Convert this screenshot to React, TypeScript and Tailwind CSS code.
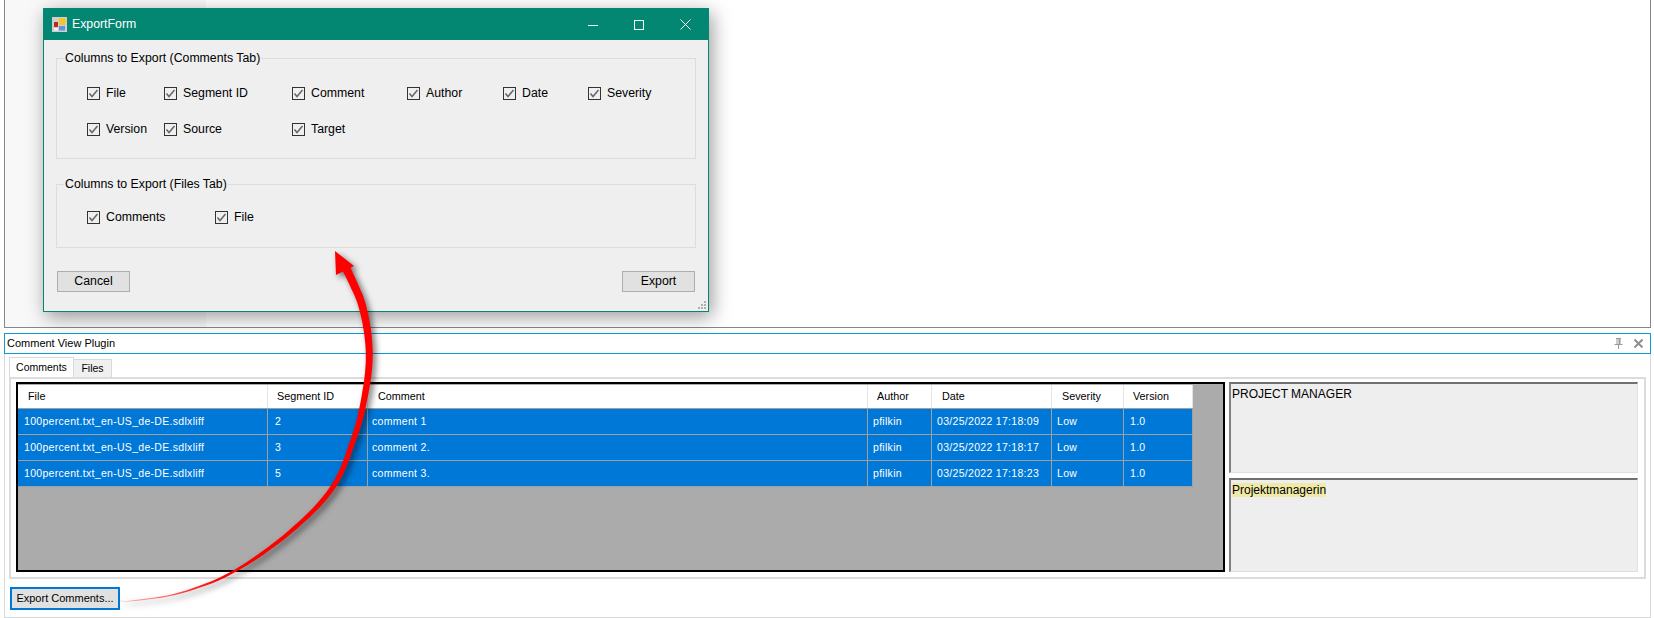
const FONT = "font-['Liberation_Sans',Arial,sans-serif]";

const columns = [
  { name: "File", pad: "pl-[10px]" },
  { name: "Segment ID", pad: "pl-[9px]" },
  { name: "Comment", pad: "pl-[10px]" },
  { name: "Author", pad: "pl-[9px]" },
  { name: "Date", pad: "pl-[10px]" },
  { name: "Severity", pad: "pl-[10px]" },
  { name: "Version", pad: "pl-[9px]" },
];

const cellPads = ["pl-[6px]", "pl-[7px]", "pl-[4px]", "pl-[5px]", "pl-[5px]", "pl-[5px]", "pl-[6px]"];

const rows = [
  ["100percent.txt_en-US_de-DE.sdlxliff", "2", "comment 1", "pfilkin", "03/25/2022 17:18:09", "Low", "1.0"],
  ["100percent.txt_en-US_de-DE.sdlxliff", "3", "comment 2.", "pfilkin", "03/25/2022 17:18:17", "Low", "1.0"],
  ["100percent.txt_en-US_de-DE.sdlxliff", "5", "comment 3.", "pfilkin", "03/25/2022 17:18:23", "Low", "1.0"],
];

const GRID_COLS = "grid grid-cols-[250px_100px_500px_64px_120px_72px_69px] w-[1175px]";

const Check = ({ label, w }: { label: string; w: string }) => (
  <div className={`flex items-center gap-[6px] ${w}`}>
    <span className="w-[13px] h-[13px] border border-[#333] flex items-center justify-center">
      <svg width="11" height="11" viewBox="0 0 11 11" fill="none">
        <path d="M1.5 5.5 L4 8.5 L9.5 2" stroke="#666" strokeWidth="1.5" />
      </svg>
    </span>
    <span className="text-[12.3px] leading-none text-black">{label}</span>
  </div>
);

const Group = ({ title, h, children }: { title: string; h: string; children: React.ReactNode }) => (
  <div className={`relative border border-[#dcdcdc] ${h}`}>
    <span className="absolute left-[7px] -top-[8px] bg-[#efefef] px-[1px] text-[12.3px] leading-[15px] text-black whitespace-nowrap">
      {title}
    </span>
    {children}
  </div>
);

const WinButton = ({ label }: { label: string }) => (
  <div className="w-[73px] h-[21px] border border-[#adadad] bg-[#e1e1e1] flex items-center justify-center text-[12.3px] text-black">
    {label}
  </div>
);

const ExportForm = () => (
  <div className="absolute left-[43px] top-[8px] w-[666px] h-[304px] flex flex-col border border-[#038672] bg-[#efefef] shadow-[3px_5px_18px_rgba(0,0,0,0.4)]">
    <div className="h-[31px] bg-[#038672] flex items-center shrink-0 text-white">
      <svg className="ml-[8px]" width="15" height="15" viewBox="0 0 15 15">
        <rect width="15" height="15" fill="#cfcfcf" />
        <rect x="2" y="5" width="4" height="5" fill="#c0281f" />
        <rect x="7" y="1" width="6.5" height="7" fill="#f4c430" />
        <rect x="7" y="9" width="6" height="4.5" fill="#5f93e0" />
        <rect x="2" y="11" width="4" height="2.5" fill="#f2f2f2" />
      </svg>
      <span className="ml-[5px] text-[12.3px] pb-[1px]">ExportForm</span>
      <div className="ml-auto flex items-center mr-[17px]">
        <svg width="10" height="10" viewBox="0 0 10 10" className="mr-[36px]"><path d="M0 5.5H10" stroke="#fff" /></svg>
        <svg width="10" height="10" viewBox="0 0 10 10" className="mr-[36px]"><rect x="0.5" y="0.5" width="9" height="9" fill="none" stroke="#fff" /></svg>
        <svg width="11" height="11" viewBox="0 0 11 11"><path d="M0.5 0.5L10.5 10.5M10.5 0.5L0.5 10.5" stroke="#fff" /></svg>
      </div>
    </div>
    <div className="relative flex-1 flex flex-col px-[12px] pt-[18px]">
      <Group title="Columns to Export (Comments Tab)" h="h-[101px] w-[640px] mb-[25px]">
        <div className="flex pl-[30px] pt-[28px]">
          <Check label="File" w="w-[77px]" />
          <Check label="Segment ID" w="w-[128px]" />
          <Check label="Comment" w="w-[115px]" />
          <Check label="Author" w="w-[96px]" />
          <Check label="Date" w="w-[85px]" />
          <Check label="Severity" w="w-[80px]" />
        </div>
        <div className="flex pl-[30px] pt-[23px]">
          <Check label="Version" w="w-[77px]" />
          <Check label="Source" w="w-[128px]" />
          <Check label="Target" w="w-[115px]" />
        </div>
      </Group>
      <Group title="Columns to Export (Files Tab)" h="h-[64px] w-[640px] mb-[23px]">
        <div className="flex pl-[30px] pt-[26px]">
          <Check label="Comments" w="w-[128px]" />
          <Check label="File" w="w-[80px]" />
        </div>
      </Group>
      <div className="flex justify-between w-[639px] pl-[1px]">
        <WinButton label="Cancel" />
        <WinButton label="Export" />
      </div>
      <svg className="absolute right-[2px] bottom-[2px]" width="8" height="8" viewBox="0 0 8 8" fill="#b0b0b0">
        <rect x="6" y="0" width="2" height="2" />
        <rect x="3" y="3" width="2" height="2" />
        <rect x="6" y="3" width="2" height="2" />
        <rect x="0" y="6" width="2" height="2" />
        <rect x="3" y="6" width="2" height="2" />
        <rect x="6" y="6" width="2" height="2" />
      </svg>
    </div>
  </div>
);

// tapered centre line of the hand-drawn arrow: x, y, stroke width
const ARROW: [number, number, number][] = [
  [120, 601, 0.4], [135, 600.5, 0.8], [180, 593, 1.5], [233, 572, 2.6], [290, 532, 4], [333, 487, 5],
  [355, 435, 5.5], [364, 400, 6.2], [369, 365, 6.8], [368, 335, 7.2], [362, 305, 7.6], [354, 285, 8], [345, 266, 8.5],
];

// catmull-rom through the points above so the shaft has no corners
const smoothArrow = () => {
  const out: [number, number, number][] = [];
  for (let i = 0; i < ARROW.length - 1; i++) {
    const p0 = ARROW[Math.max(i - 1, 0)];
    const p1 = ARROW[i];
    const p2 = ARROW[i + 1];
    const p3 = ARROW[Math.min(i + 2, ARROW.length - 1)];
    for (let s = 0; s < 8; s++) {
      const t = s / 8;
      const v = [0, 1, 2].map(
        (k) =>
          0.5 *
          (2 * p1[k] +
            (p2[k] - p0[k]) * t +
            (2 * p0[k] - 5 * p1[k] + 4 * p2[k] - p3[k]) * t * t +
            (3 * p1[k] - p0[k] - 3 * p2[k] + p3[k]) * t * t * t)
      );
      out.push([v[0], v[1], v[2]]);
    }
  }
  out.push(ARROW[ARROW.length - 1]);
  return out;
};

const arrowShaft = () => {
  const pts = smoothArrow();
  const left: string[] = [];
  const right: string[] = [];
  pts.forEach(([x, y, w], i) => {
    const a = pts[Math.max(i - 1, 0)];
    const b = pts[Math.min(i + 1, pts.length - 1)];
    const dx = b[0] - a[0];
    const dy = b[1] - a[1];
    const len = Math.hypot(dx, dy);
    left.push(`${(x + ((-dy / len) * w) / 2).toFixed(1)} ${(y + ((dx / len) * w) / 2).toFixed(1)}`);
    right.unshift(`${(x - ((-dy / len) * w) / 2).toFixed(1)} ${(y - ((dx / len) * w) / 2).toFixed(1)}`);
  });
  return `M${left.join("L")}L${right.join("L")}Z`;
};

const Arrow = () => (
  <svg className="absolute left-0 top-0 pointer-events-none drop-shadow-[3px_3px_3px_rgba(0,0,0,0.55)]" width="1654" height="618" viewBox="0 0 1654 618">
    <defs>
      <linearGradient id="fade" gradientUnits="userSpaceOnUse" x1="120" y1="600" x2="220" y2="580">
        <stop offset="0" stopColor="#ffb0b0" />
        <stop offset="1" stopColor="#ff0000" />
      </linearGradient>
    </defs>
    <path d={arrowShaft()} fill="url(#fade)" />
    <path d="M335 251L354 266L336 275Z" fill="#ff0000" />
  </svg>
);

const TextBox = ({ h, children }: { h: string; children: React.ReactNode }) => (
  <div className={`${h} bg-[#eeeeee] border-t-2 border-l-2 border-t-[#707070] border-l-[#808080] border-r border-b border-r-[#e0e0e0] border-b-[#e0e0e0] pl-[1px] pt-[2px] text-[12px] leading-[16px] text-black`}>
    {children}
  </div>
);

export default function App() {
  return (
    <div className={`relative w-[1654px] h-[618px] overflow-hidden bg-white flex flex-col ${FONT}`}>
      {/* document pane, its top edge is cut off */}
      <div className="ml-[4px] w-[1647px] h-[328px] shrink-0 border-l border-r border-b border-[#85858b] flex">
        <div className="w-[201px] bg-[#f8f8f8]" />
      </div>

      <div className="ml-[4px] mt-[5px] w-[1647px] h-[21px] shrink-0 border border-[#0f9ad3] flex items-center justify-between pl-[2px] pr-[6px] text-[11px] text-black">
        <span className="pb-[1px]">Comment View Plugin</span>
        <div className="flex items-center gap-[10px]">
          <svg width="9" height="11" viewBox="0 0 9 11" fill="#9a9a9a">
            <path d="M2 0H7V1H6.5V6H8.5V7H5V11H4V7H0.5V6H2.5V1H2ZM3.5 1V6H4.5V1Z" />
          </svg>
          <svg width="11" height="9" viewBox="0 0 11 9">
            <path d="M1.5 0.5L9.5 8.5M9.5 0.5L1.5 8.5" stroke="#8e8e8e" strokeWidth="2" />
          </svg>
        </div>
      </div>

      <div className="ml-[4px] w-[1647px] h-[264px] shrink-0 border-l border-r border-b border-[#d8d8d8] pl-[4px] pr-[5px] pt-[3px] flex flex-col">
        <div className="flex items-end h-[20px] shrink-0 text-[10.5px] text-black">
          <div className="w-[65px] h-[20px] border border-b-0 border-[#d9d9d9] bg-white flex items-center justify-center">Comments</div>
          <div className="w-[38px] h-[18px] border border-b-0 border-l-0 border-[#d9d9d9] bg-[#f0f0f0] flex items-center justify-center">Files</div>
        </div>
        <div className="w-[1637px] h-[202px] border-2 border-[#dcdcdc] bg-white flex gap-[4px] pl-[5px] pt-[3px]">
          <div className="w-[1209px] h-[190px] border-2 border-black bg-[#ababab] pt-[1px] text-[10.8px]">
            <div className={`${GRID_COLS} h-[24px] bg-white border-b border-[#a0a0a0]`}>
              {columns.map((col) => (
                <div key={col.name} className={`${col.pad} flex items-center text-black border-r border-[#e4e4e4]`}>{col.name}</div>
              ))}
            </div>
            {rows.map((row, r) => (
              <div key={r} className={`${GRID_COLS} h-[26px] bg-[#0078d7] text-white border-b border-[#a0a0a0] text-[10.5px] tracking-[0.3px]`}>
                {row.map((cell, c) => (
                  <div key={c} className={`${cellPads[c]} flex items-center border-r border-[#a0a0a0] whitespace-pre`}>{cell}</div>
                ))}
              </div>
            ))}
          </div>
          <div className="w-[409px] flex flex-col gap-[5px]">
            <TextBox h="h-[91px]">PROJECT MANAGER</TextBox>
            <TextBox h="h-[94px]"><span className="bg-[#f0eaa8]">Projektmanagerin</span></TextBox>
          </div>
        </div>
        <div className="mt-[8px] ml-[1px] w-[110px] h-[23px] border-2 border-[#0078d7] bg-[#e1e1e1] flex items-center justify-center text-[11px] text-black whitespace-nowrap">
          Export Comments...
        </div>
      </div>

      <ExportForm />
      <Arrow />
    </div>
  );
}
